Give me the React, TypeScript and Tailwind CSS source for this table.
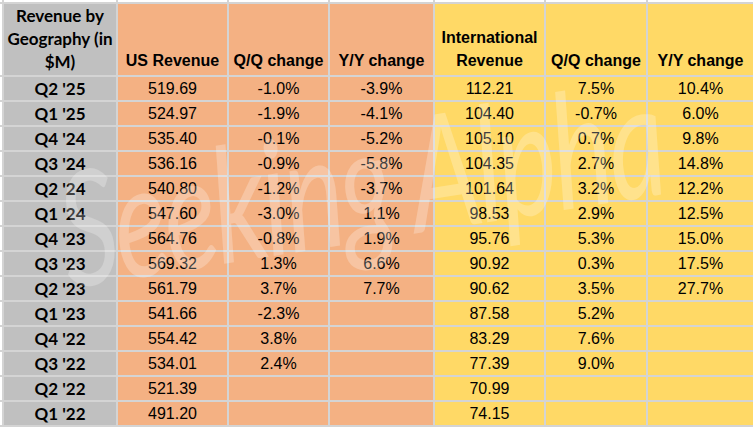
import React from 'react';

type Row = [string, string, string, string, string, string, string];

const rows: Row[] = [
  ["Q2 '25", '519.69', '-1.0%', '-3.9%', '112.21', '7.5%', '10.4%'],
  ["Q1 '25", '524.97', '-1.9%', '-4.1%', '104.40', '-0.7%', '6.0%'],
  ["Q4 '24", '535.40', '-0.1%', '-5.2%', '105.10', '0.7%', '9.8%'],
  ["Q3 '24", '536.16', '-0.9%', '-5.8%', '104.35', '2.7%', '14.8%'],
  ["Q2 '24", '540.80', '-1.2%', '-3.7%', '101.64', '3.2%', '12.2%'],
  ["Q1 '24", '547.60', '-3.0%', '1.1%', '98.53', '2.9%', '12.5%'],
  ["Q4 '23", '564.76', '-0.8%', '1.9%', '95.76', '5.3%', '15.0%'],
  ["Q3 '23", '569.32', '1.3%', '6.6%', '90.92', '0.3%', '17.5%'],
  ["Q2 '23", '561.79', '3.7%', '7.7%', '90.62', '3.5%', '27.7%'],
  ["Q1 '23", '541.66', '-2.3%', '', '87.58', '5.2%', ''],
  ["Q4 '22", '554.42', '3.8%', '', '83.29', '7.6%', ''],
  ["Q3 '22", '534.01', '2.4%', '', '77.39', '9.0%', ''],
  ["Q2 '22", '521.39', '', '', '70.99', '', ''],
  ["Q1 '22", '491.20', '', '', '74.15', '', ''],
];

const orange = 'bg-[#f4b183]';
const yellow = 'bg-[#ffd966]';
const grey = 'bg-[#c0c0c0]';

const Head = ({ bg, children }: { bg: string; children: React.ReactNode }) => (
  <div className={`${bg} flex items-end justify-center pb-[3px] text-center font-bold text-[16px] leading-[23px] text-black font-['Liberation_Sans',Arial,sans-serif]`}>
    <div>{children}</div>
  </div>
);

const Cell = ({ bg, children }: { bg: string; children?: React.ReactNode }) => (
  <div className={`${bg} flex items-center justify-center text-[16px] text-black font-['Liberation_Sans',Arial,sans-serif]`}>
    {children}
  </div>
);

export default function App() {
  return (
    <div className="relative w-[753px] h-[427px] overflow-hidden bg-white">
      <div className="grid grid-cols-[2px_112px_109px_99px_103px_109px_100px_1fr] grid-rows-[2px_71px_repeat(14,23px)] gap-[2px] bg-[#d4d4d4] w-[753px] h-[429px]">
        {/* top sliver row */}
        {Array.from({ length: 8 }).map((_, i) => (
          <div key={'t' + i} className="bg-white" />
        ))}

        <div className="bg-white" />
        <div className={`${grey} flex items-end justify-center pb-[2px] text-center font-bold text-[17px] leading-[23px] text-black font-['Lato',sans-serif]`}>
          <div>Revenue by<br />Geography (in<br />$M)</div>
        </div>
        <Head bg={orange}>US Revenue</Head>
        <Head bg={orange}>Q/Q change</Head>
        <Head bg={orange}>Y/Y change</Head>
        <Head bg={yellow}>International<br />Revenue</Head>
        <Head bg={yellow}>Q/Q change</Head>
        <Head bg={yellow}>Y/Y change</Head>

        {rows.map((r) => (
          <React.Fragment key={r[0]}>
            <div className="bg-white" />
            <div className={`${grey} flex items-center justify-center font-bold text-[17px] text-black font-['Lato',sans-serif]`}>
              {r[0]}
            </div>
            <Cell bg={orange}>{r[1]}</Cell>
            <Cell bg={orange}>{r[2]}</Cell>
            <Cell bg={orange}>{r[3]}</Cell>
            <Cell bg={yellow}>{r[4]}</Cell>
            <Cell bg={yellow}>{r[5]}</Cell>
            <Cell bg={yellow}>{r[6]}</Cell>
          </React.Fragment>
        ))}
      </div>

      {/* watermark */}
      <div
        aria-hidden
        className="pointer-events-none absolute left-[-73px] top-[100px] w-[860px] text-center [transform:rotate(-9deg)_scaleX(0.7)] whitespace-nowrap text-[160px] leading-none tracking-[-0.03em] italic text-white/25 font-['Lato',sans-serif]"
      >
        Seeking Alpha
      </div>
    </div>
  );
}
